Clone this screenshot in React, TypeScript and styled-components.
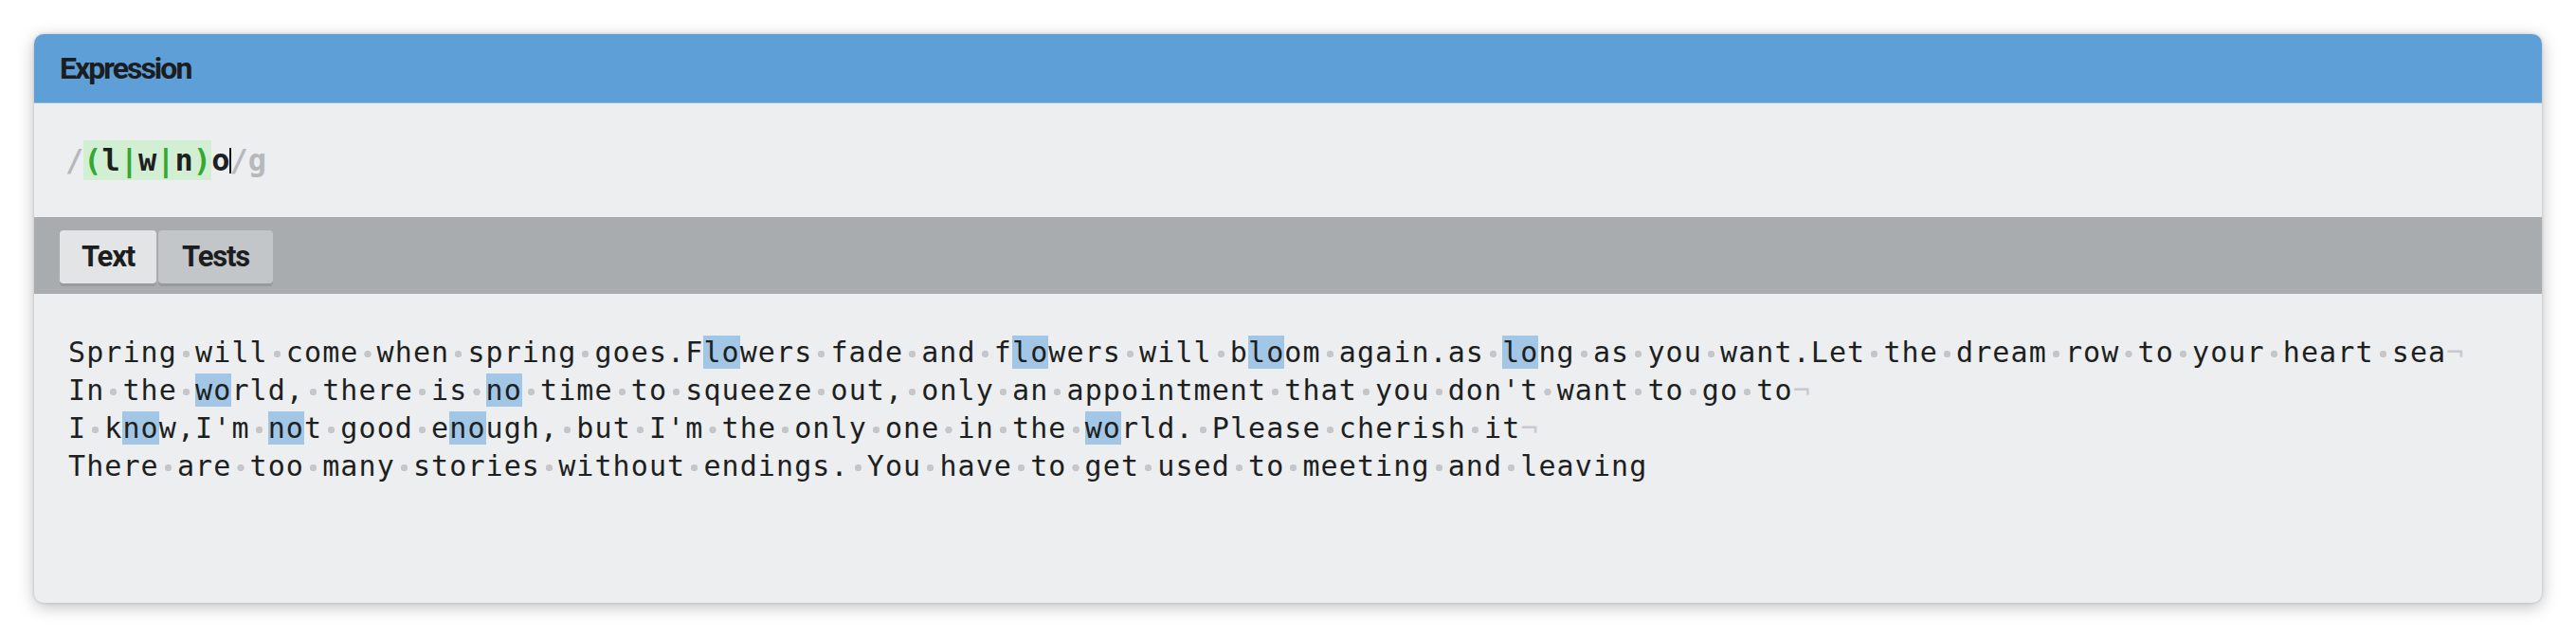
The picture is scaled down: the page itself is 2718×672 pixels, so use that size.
import React from "react";
import styled, { createGlobalStyle } from "styled-components";

const GlobalStyle = createGlobalStyle`
  html, body { margin: 0; padding: 0; background: #ffffff; }
  #root { width: 2718px; height: 672px; }
`;

const Page = styled.div`
  box-sizing: border-box;
  width: 2718px;
  height: 672px;
  padding: 36px;
`;

const Panel = styled.section`
  height: 600px;
  display: flex;
  flex-direction: column;
  border-radius: 10px;
  overflow: hidden;
  background: #eceef0;
  box-shadow: 0 4px 18px rgba(0, 0, 0, 0.26), 0 0 3px rgba(0, 0, 0, 0.18);
`;

const condensed = `"Liberation Sans Narrow", "Arial Narrow", "Roboto", sans-serif`;
const mono = `"DejaVu Sans Mono", "Liberation Mono", monospace`;

const Header = styled.header`
  height: 73px;
  flex: none;
  display: flex;
  align-items: center;
  padding-left: 27px;
  background: #5e9fd7;
  border-bottom: 1px solid #8ab8e2;
  box-sizing: border-box;
`;

const Title = styled.h1`
  margin: 0;
  font-family: ${condensed};
  font-weight: 700;
  font-size: 32px;
  letter-spacing: -2px;
  color: #1b1d1f;
`;

const ExpressionRow = styled.div`
  height: 120px;
  flex: none;
  display: flex;
  align-items: center;
  padding-left: 33px;
  box-sizing: border-box;
  font-family: ${mono};
  font-weight: 700;
  font-size: 32px;
  white-space: pre;
`;

const Tok = styled.span<{ $kind: "delim" | "group" | "char" }>`
  color: ${(p) =>
    p.$kind === "delim" ? "#b6b9bc" : p.$kind === "group" ? "#33a833" : "#1d1f21"};
`;

const GroupBox = styled.span`
  background: #d3efd3;
  padding: 2px 0;
`;

const Caret = styled.span`
  display: inline-block;
  width: 0;
  height: 27px;
  border-left: 2px solid #111;
  margin-right: -2px;
  vertical-align: -5px;
`;

const Toolbar = styled.div`
  height: 81px;
  flex: none;
  display: flex;
  align-items: center;
  gap: 2px;
  padding-left: 27px;
  box-sizing: border-box;
  background: #a8acaf;
`;

const Tab = styled.button<{ $active?: boolean }>`
  height: 56px;
  padding: 0 ${(p) => (p.$active ? 23 : 25)}px;
  border: none;
  border-radius: 4px;
  background: ${(p) => (p.$active ? "#e3e4e6" : "#c3c6c9")};
  box-shadow: 0 3px 0 #979b9e;
  font-family: ${condensed};
  font-weight: 700;
  font-size: 31px;
  letter-spacing: -1.2px;
  color: #1b1d1f;
  cursor: pointer;
  margin-top: 2px;
`;

const TextArea = styled.div`
  flex: 1;
  padding: 42px 36px;
  font-family: ${mono};
  font-size: 30px;
  letter-spacing: 1.09px;
  line-height: 40px;
  color: #1d1f21;
  white-space: pre;
`;

const Line = styled.div``;

const Match = styled.span`
  background: #a2c6e5;
`;

const Ws = styled.span`
  display: inline-block;
  background: radial-gradient(circle at 50% 21.5px, #c4c6c9 3.4px, transparent 4px);
`;

const Eol = styled.span`
  color: #c8cacd;
`;

const lines = [
  "Spring will come when spring goes.Flowers fade and flowers will bloom again.as long as you want.Let the dream row to your heart sea",
  "In the world, there is no time to squeeze out, only an appointment that you don't want to go to",
  "I know,I'm not good enough, but I'm the only one in the world. Please cherish it",
  "There are too many stories without endings. You have to get used to meeting and leaving",
];

function renderPlain(s: string, key: string) {
  const out: React.ReactNode[] = [];
  let buf = "";
  let i = 0;
  for (const ch of s) {
    if (ch === " ") {
      if (buf) out.push(buf);
      buf = "";
      out.push(<Ws key={`${key}-w${i}`}> </Ws>);
    } else {
      buf += ch;
    }
    i++;
  }
  if (buf) out.push(buf);
  return out;
}

function renderLine(text: string, li: number) {
  const re = /(l|w|n)o/g;
  const nodes: React.ReactNode[] = [];
  let last = 0;
  let m: RegExpExecArray | null;
  let k = 0;
  while ((m = re.exec(text))) {
    nodes.push(...renderPlain(text.slice(last, m.index), `${li}-${k}`));
    nodes.push(<Match key={`${li}-m${k}`}>{m[0]}</Match>);
    last = m.index + m[0].length;
    k++;
  }
  nodes.push(...renderPlain(text.slice(last), `${li}-end`));
  return nodes;
}

export default function App() {
  return (
    <>
      <GlobalStyle />
      <Page>
        <Panel>
          <Header>
            <Title>Expression</Title>
          </Header>
          <ExpressionRow>
            <Tok $kind="delim">/</Tok>
            <GroupBox>
              <Tok $kind="group">(</Tok>
              <Tok $kind="char">l</Tok>
              <Tok $kind="group">|</Tok>
              <Tok $kind="char">w</Tok>
              <Tok $kind="group">|</Tok>
              <Tok $kind="char">n</Tok>
              <Tok $kind="group">)</Tok>
            </GroupBox>
            <Tok $kind="char">o</Tok>
            <Caret />
            <Tok $kind="delim">/g</Tok>
          </ExpressionRow>
          <Toolbar>
            <Tab $active>Text</Tab>
            <Tab>Tests</Tab>
          </Toolbar>
          <TextArea>
            {lines.map((l, i) => (
              <Line key={i}>
                {renderLine(l, i)}
                {i < lines.length - 1 && <Eol>¬</Eol>}
              </Line>
            ))}
          </TextArea>
        </Panel>
      </Page>
    </>
  );
}
